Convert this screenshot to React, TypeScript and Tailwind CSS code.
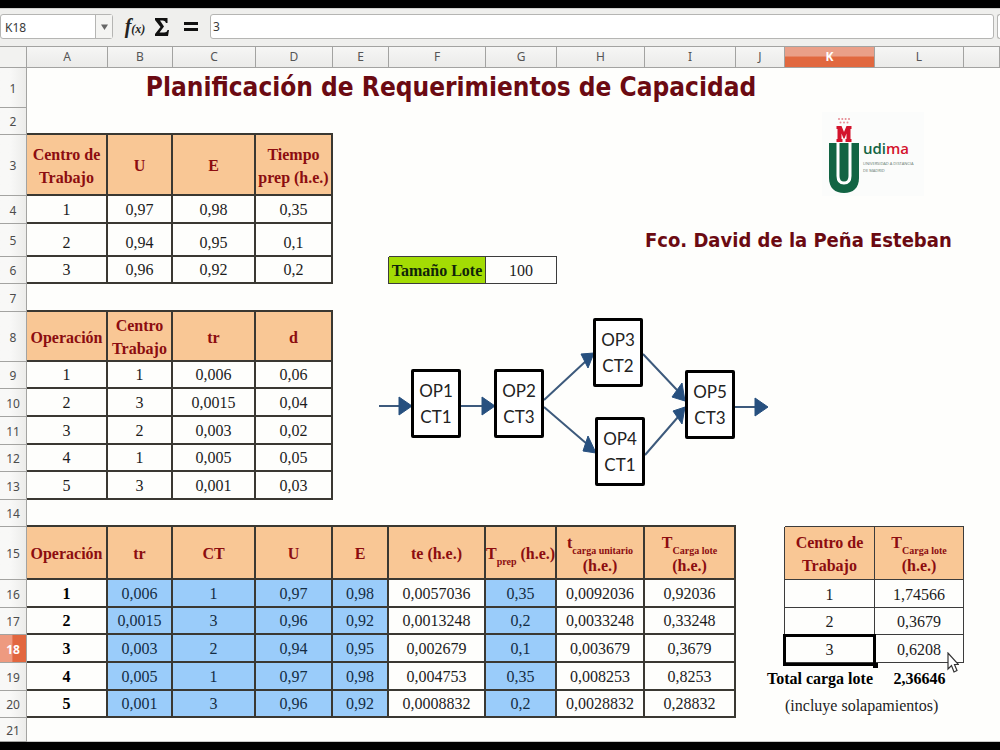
import type { ReactNode } from "react";

const COLUMNS = ["A", "B", "C", "D", "E", "F", "G", "H", "I", "J", "K", "L", ""];

const SERIF = "font-['Liberation_Serif',serif]";
const TITLE = "font-['DejaVu_Sans_Condensed','DejaVu_Sans',sans-serif] font-bold text-[#6b0a12]";

type Tone = "plain" | "bold" | "head" | "blue" | "green";

const TONES: Record<Tone, string> = {
  plain: "text-[#1c1c1c] align-bottom",
  bold: "text-black font-bold align-bottom",
  head: "bg-[#f9c795] text-[#8c0d10] font-bold align-middle",
  blue: "bg-[#9accfa] text-[#142c44] align-bottom",
  green: "bg-[#a3dc04] text-[#10240a] font-bold align-bottom",
};

const EDGES = {
  thick: "border-r-2 border-b-2 border-[#3a3832]",
  thin: "border-r border-b border-[#3c3c3c]",
  below: "border-b-2 border-[#3a3832]",
  belowThin: "border-b border-[#3c3c3c]",
  right: "border-r border-[#3c3c3c]",
  none: "",
};

type CellProps = {
  children?: ReactNode;
  tone?: Tone;
  edge?: keyof typeof EDGES;
  span?: number;
};

function Cell({ children, tone = "plain", edge = "none", span = 1 }: CellProps) {
  return (
    <td colSpan={span} className={`p-0 text-center leading-6 whitespace-nowrap ${TONES[tone]} ${EDGES[edge]}`}>
      {children}
    </td>
  );
}

function Head({ children, edge = "thick" }: { children: ReactNode; edge?: "thick" | "thin" }) {
  return (
    <Cell tone="head" edge={edge}>
      <div className="pt-0.5 leading-[23px]">{children}</div>
    </Cell>
  );
}

function Row({ n, height, active, children }: { n: number; height: string; active?: boolean; children?: ReactNode }) {
  const look = active
    ? "bg-linear-to-r from-[#ee9a80] from-45% to-[#e2673f] to-50% text-white font-bold"
    : "bg-linear-to-r from-[#f8f8f7] from-40% to-[#ececea] text-[#4c4c4c] font-normal";
  return (
    <tr className={height}>
      <th
        scope="row"
        className={`border-r border-b border-[#a3a3a1] p-0 pt-0.5 text-center align-middle font-['Noto_Sans',sans-serif] text-xs leading-5 ${look}`}
      >
        {n}
      </th>
      {children}
    </tr>
  );
}

function Sub({ children }: { children: ReactNode }) {
  return <sub className="-bottom-1.5 text-[10px]">{children}</sub>;
}

const centers = [
  { n: 4, height: "h-[28px]", values: ["1", "0,97", "0,98", "0,35"] },
  { n: 5, height: "h-[33px]", values: ["2", "0,94", "0,95", "0,1"] },
  { n: 6, height: "h-[27px]", values: ["3", "0,96", "0,92", "0,2"] },
];

const operations = [
  { n: 9, height: "h-[27px]", values: ["1", "1", "0,006", "0,06"] },
  { n: 10, height: "h-[28px]", values: ["2", "3", "0,0015", "0,04"] },
  { n: 11, height: "h-[28px]", values: ["3", "2", "0,003", "0,02"] },
  { n: 12, height: "h-[27px]", values: ["4", "1", "0,005", "0,05"] },
  { n: 13, height: "h-[28px]", values: ["5", "3", "0,001", "0,03"] },
];

const loads = [
  { n: 16, height: "h-[28px]", values: ["1", "0,006", "1", "0,97", "0,98", "0,0057036", "0,35", "0,0092036", "0,92036"], center: "1", total: "1,74566" },
  { n: 17, height: "h-[27px]", values: ["2", "0,0015", "3", "0,96", "0,92", "0,0013248", "0,2", "0,0033248", "0,33248"], center: "2", total: "0,3679" },
  { n: 18, height: "h-[28px]", values: ["3", "0,003", "2", "0,94", "0,95", "0,002679", "0,1", "0,003679", "0,3679"], center: "3", total: "0,6208" },
  { n: 19, height: "h-[28px]", values: ["4", "0,005", "1", "0,97", "0,98", "0,004753", "0,35", "0,008253", "0,8253"] },
  { n: 20, height: "h-[27px]", values: ["5", "0,001", "3", "0,96", "0,92", "0,0008832", "0,2", "0,0028832", "0,28832"] },
];

const LOAD_TONES: Tone[] = ["bold", "blue", "blue", "blue", "blue", "plain", "blue", "plain", "plain"];

const nodes = [
  { op: "OP1", ct: "CT1", place: "left-[32px] top-[51px]" },
  { op: "OP2", ct: "CT3", place: "left-[115px] top-[51px]" },
  { op: "OP3", ct: "CT2", place: "left-[214px] top-0" },
  { op: "OP4", ct: "CT1", place: "left-[216px] top-[99px]" },
  { op: "OP5", ct: "CT3", place: "left-[306px] top-[52px]" },
];

function Diagram() {
  return (
    <div className="relative ml-[46px] h-[168px] w-[390px]">
      <svg className="absolute inset-0" width="390" height="168" viewBox="0 0 390 168" aria-hidden="true">
        <path
          d="M0 88H24M82 88H106M165 82L207 43M165 89L208 126M264 36L298 72M266 137L299 99M356 89H380"
          stroke="#3d5a7c"
          strokeWidth="2"
          fill="none"
        />
        <path
          d="M20 79L33 88L20 97ZM103 79L116 88L103 97ZM202 36L215 35L209 50ZM209 118L217 135L204 133ZM303 65L306 83L293 79ZM294 93L306 89L303 106ZM376 80L389 89L376 98Z"
          fill="#27507f"
          stroke="#27507f"
        />
      </svg>
      {nodes.map((node) => (
        <div
          key={node.op}
          className={`absolute flex h-[69px] w-[50px] flex-col items-center justify-center rounded-[2px] border-[3px] border-black bg-white font-['Lato',sans-serif] text-[17px] leading-[26px] text-[#222] ${node.place}`}
        >
          <span>{node.op}</span>
          <span>{node.ct}</span>
        </div>
      ))}
    </div>
  );
}

function Logo() {
  return (
    <div className="mt-1 mr-[76px] ml-auto flex h-[84px] w-[102px] bg-[#fbfcfb] pt-[4px] pl-[6px]">
      <svg className="shrink-0" width="32" height="78" viewBox="0 0 32 78" aria-hidden="true">
        <g fill="#e58a92">
          <circle cx="11" cy="3" r="1" />
          <circle cx="14.300" cy="3" r="1" />
          <circle cx="17.600" cy="3" r="1" />
          <circle cx="21" cy="3" r="1" />
          <circle cx="12.500" cy="6.500" r="1" />
          <circle cx="16" cy="6.500" r="1" />
          <circle cx="19.500" cy="6.500" r="1" />
        </g>
        <path d="M1 27H31V62C31 72 25 77 16 77S1 72 1 62Z" fill="#126443" />
        <path d="M10 27V60Q10 67 16 67T22 60V27" fill="none" stroke="#fff" strokeWidth="3" />
        <path d="M8.500 10H13.500L16 16L18.500 10H23.500V13H22.500V23H23.500V26H17.500V23H18.500V17.500L16.500 22.500H15.500L13.500 17.500V23H14.500V26H8.500V23H9.500V13H8.500Z" fill="#d3132c" />
      </svg>
      <div className="pt-5 pl-[3px] font-['Open_Sans',sans-serif]">
        <div className="text-[15px] leading-6 font-semibold text-[#d3132c]">
          <span className="text-[#126443]">udi</span>ma
        </div>
        <div className="text-[4px] leading-[7px] whitespace-nowrap text-[#5f786c]">
          UNIVERSIDAD A DISTANCIA
          <br />
          DE MADRID
        </div>
      </div>
    </div>
  );
}

function Toolbar() {
  return (
    <div className="flex h-[38px] items-center gap-[3px] border-t border-[#cfcfcd] bg-[#efefed] pb-0.5 font-['Noto_Sans',sans-serif] text-[#3a3a3a]">
      <div className="flex h-[25px] w-[113px] shrink-0 rounded-[3px] border border-[#b5b5b3] bg-white">
        <input aria-label="Name box" defaultValue="K18" className="w-[94px] min-w-0 bg-transparent pt-0.5 pl-1 text-xs outline-none" />
        <button
          type="button"
          aria-label="Open name list"
          className="flex flex-1 items-center justify-center border-l border-[#b5b5b3] bg-[#f4f4f2]"
        >
          <svg width="7" height="6" viewBox="0 0 7 6" aria-hidden="true">
            <path d="M0 0.500H7L3.500 6Z" fill="#666" />
          </svg>
        </button>
      </div>
      <button type="button" aria-label="Function wizard" className="ml-[7px] flex w-[24px] items-baseline justify-center pb-0.5 font-['Liberation_Serif',serif] leading-6 text-[#222] italic">
        <span className="text-xl font-bold">f</span>
        <span className="text-xs font-bold">(x)</span>
      </button>
      <button type="button" aria-label="Sum" className="flex w-[24px] justify-center">
        <svg width="14" height="18" viewBox="0 0 14 18" aria-hidden="true">
          <path d="M0 0H12.500V5H11Q10.500 2.500 8 2.500H5L9 8.500L4.500 14.500H9Q12 14.500 12.500 12H14L13 18H0V16L5.500 9L0 2Z" fill="#111" />
        </svg>
      </button>
      <button type="button" aria-label="Formula" className="flex w-[28px] justify-center">
        <svg width="14" height="10" viewBox="0 0 14 10" aria-hidden="true">
          <path d="M0 0H14V3H0ZM0 6H14V9H0Z" fill="#111" />
        </svg>
      </button>
      <input
        aria-label="Formula input"
        defaultValue="3"
        className="ml-0.5 h-[25px] min-w-0 flex-1 rounded-[3px] border border-[#b5b5b3] bg-white pl-0.5 text-xs outline-none"
      />
      <div className="h-[25px] w-[3px] rounded-l-[3px] border border-r-0 border-[#b5b5b3] bg-white" />
    </div>
  );
}

export default function App() {
  return (
    <div className="min-h-screen overflow-hidden bg-black py-2">
      <Toolbar />
      <table className={`w-full table-fixed border-separate border-spacing-0 bg-[#fefefc] text-base ${SERIF}`}>
        <colgroup>
          <col className="w-[27px]" />
          <col className="w-[81px]" />
          <col className="w-[65px]" />
          <col className="w-[83px]" />
          <col className="w-[77px]" />
          <col className="w-[56px]" />
          <col className="w-[97px]" />
          <col className="w-[71px]" />
          <col className="w-[88px]" />
          <col className="w-[91px]" />
          <col className="w-[49px]" />
          <col className="w-[90px]" />
          <col className="w-[89px]" />
          <col />
        </colgroup>
        <thead>
          <tr className="h-[22px] font-['Noto_Sans',sans-serif] text-xs leading-5">
            <td className="border-y border-r border-[#a3a3a1] bg-[#f2f2f0] p-0" />
            {COLUMNS.map((name) => (
              <th
                key={name}
                scope="col"
                className={`border-y border-r border-[#a3a3a1] p-0 ${
                  name === "K"
                    ? "bg-linear-to-b from-[#ea9f88] from-45% to-[#e1683f] to-50% text-white font-bold"
                    : "bg-linear-to-b from-[#f6f6f5] to-[#ebebe9] text-[#555] font-normal"
                }`}
              >
                {name}
              </th>
            ))}
          </tr>
        </thead>
        <tbody>
          <Row n={1} height="h-[40px]">
            <td colSpan={11} className="p-0 text-center align-top">
              <h1 className={`text-[26px] leading-[38px] ${TITLE}`}>Planificación de Requerimientos de Capacidad</h1>
            </td>
            <Cell span={2} />
          </Row>
          <Row n={2} height="h-[27px]">
            <Cell span={4} edge="below" />
            <td colSpan={9} rowSpan={3} className="p-0 align-top">
              <Logo />
            </td>
          </Row>
          <Row n={3} height="h-[61px]">
            <Head>Centro de<br />Trabajo</Head>
            <Head>U</Head>
            <Head>E</Head>
            <Head>Tiempo<br />prep (h.e.)</Head>
          </Row>
          {centers.map((row) => (
            <Row key={row.n} n={row.n} height={row.height}>
              {row.values.map((value, i) => (
                <Cell key={i} edge="thick">{value}</Cell>
              ))}
              {row.n === 5 && (
                <>
                  <Cell />
                  <Cell span={2} edge="belowThin" />
                  <Cell />
                  <td colSpan={3} className="p-0 text-center align-top">
                    <h2 className={`text-xl leading-8 whitespace-nowrap ${TITLE}`}>Fco. David de la Peña Esteban</h2>
                  </td>
                  <Cell span={2} />
                </>
              )}
              {row.n === 6 && (
                <>
                  <Cell edge="right" />
                  <Cell tone="green" edge="thin">Tamaño Lote</Cell>
                  <Cell edge="thin">100</Cell>
                  <Cell span={6} />
                </>
              )}
            </Row>
          ))}
          <Row n={7} height="h-[28px]">
            <Cell span={4} edge="below" />
            <td colSpan={9} rowSpan={7} className="p-0 pt-[34px] align-top">
              <Diagram />
            </td>
          </Row>
          <Row n={8} height="h-[50px]">
            <Head>Operación</Head>
            <Head>Centro<br />Trabajo</Head>
            <Head>tr</Head>
            <Head>d</Head>
          </Row>
          {operations.map((row) => (
            <Row key={row.n} n={row.n} height={row.height}>
              {row.values.map((value, i) => (
                <Cell key={i} edge="thick">{value}</Cell>
              ))}
            </Row>
          ))}
          <Row n={14} height="h-[27px]">
            <Cell span={9} edge="below" />
            <Cell />
            <Cell span={2} edge="belowThin" />
            <Cell />
          </Row>
          <Row n={15} height="h-[53px]">
            <Head>Operación</Head>
            <Head>tr</Head>
            <Head>CT</Head>
            <Head>U</Head>
            <Head>E</Head>
            <Head>te (h.e.)</Head>
            <Head>T<Sub>prep</Sub> (h.e.)</Head>
            <Head>t<Sub>carga unitario</Sub><br />(h.e.)</Head>
            <Head>T<Sub>Carga lote</Sub><br />(h.e.)</Head>
            <Cell edge="right" />
            <Head edge="thin">Centro de<br />Trabajo</Head>
            <Head edge="thin">T<Sub>Carga lote</Sub><br />(h.e.)</Head>
            <Cell />
          </Row>
          {loads.map((row) => (
            <Row key={row.n} n={row.n} height={row.height} active={row.n === 18}>
              {row.values.map((value, i) => (
                <Cell key={i} tone={LOAD_TONES[i]} edge="thick">{value}</Cell>
              ))}
              {row.center && (
                <>
                  <Cell edge="right" />
                  <Cell edge="thin">
                    {row.n === 18 ? (
                      <div className="relative">
                        {row.center}
                        <div className="absolute -inset-x-0.5 -top-1 -bottom-1 border-[3px] border-black" />
                        <div className="absolute -right-1 -bottom-1.5 size-[5px] bg-black" />
                      </div>
                    ) : (
                      row.center
                    )}
                  </Cell>
                  <Cell edge="thin">
                    {row.n === 18 ? (
                      <div className="relative">
                        {row.total}
                        <svg className="absolute top-3.5 right-1" width="12" height="22" viewBox="0 0 12 22" aria-hidden="true">
                          <path d="M1 1V17L4.500 13.500L7 20L10 18.500L7.500 12.500H11.500Z" fill="#fff" stroke="#333" strokeWidth="1.200" />
                        </svg>
                      </div>
                    ) : (
                      row.total
                    )}
                  </Cell>
                  <Cell />
                </>
              )}
              {row.n === 19 && (
                <>
                  <td colSpan={2} className="p-0 pr-0.5 text-right align-bottom leading-6 font-bold text-black">Total carga lote</td>
                  <Cell tone="bold">2,36646</Cell>
                  <Cell />
                </>
              )}
              {row.n === 20 && (
                <>
                  <Cell />
                  <td colSpan={2} className="p-0 align-bottom leading-6 text-[#1c1c1c]">(incluye solapamientos)</td>
                  <Cell />
                </>
              )}
            </Row>
          ))}
          <Row n={21} height="h-[24px]">
            <td colSpan={13} className="border-b border-[#c9c9c7] p-0" />
          </Row>
        </tbody>
      </table>
    </div>
  );
}
